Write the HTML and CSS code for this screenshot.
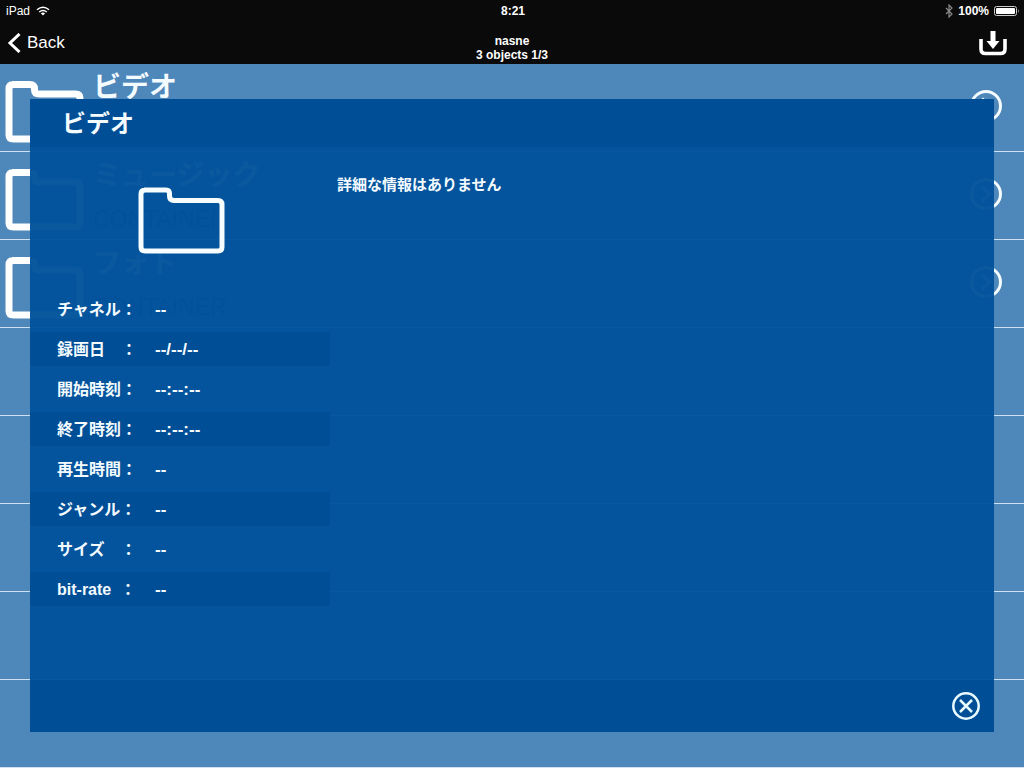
FILE: index.html
```html
<!DOCTYPE html>
<html lang="ja">
<head>
<meta charset="utf-8">
<meta name="viewport" content="width=device-width, initial-scale=1">
<title>nasne</title>
<link rel="stylesheet" href="styles.css">
</head>
<body>
<svg class="symbols" aria-hidden="true">
  <symbol id="folder" viewBox="0 0 78 62">
    <path d="M6.500 3.500H24Q29 3.500 29 8V9Q29 13 34 13H70Q74.500 13 74.500 17.500V54Q74.500 58 70 58H8Q3.500 58 3.500 54V8Q3.500 3.500 8 3.500Z"/>
  </symbol>
  <symbol id="more" viewBox="0 0 34 34">
    <circle cx="17" cy="17" r="14.500"/>
    <path d="M13 9.500L20.500 17L13 24.500"/>
  </symbol>
</svg>
<header class="top">
  <div class="status">
    <div class="status-left">
      <span>iPad</span>
      <svg class="wifi" viewBox="0 0 14 10" aria-hidden="true">
        <path d="M1 3.800Q7 -1.400 13 3.800M3.200 6Q7 2.800 10.800 6" fill="none" stroke="#fff" stroke-width="1.400"/>
        <path d="M4.800 7.300Q7 5.600 9.200 7.300L7 9.600Z" fill="#fff"/>
      </svg>
    </div>
    <time>8:21</time>
    <div class="status-right">
      <svg class="bluetooth" viewBox="0 0 8 14" aria-hidden="true"><path d="M1 4L7 10L4 13V1L7 4L1 10" fill="none" stroke="#888" stroke-width="1.200"/></svg>
      <span>100%</span>
      <svg class="battery" viewBox="0 0 26 10" aria-hidden="true">
        <rect x=".5" y=".5" width="22" height="9" rx="2" fill="none" stroke="#ccc"/>
        <rect x="2" y="2" width="19" height="6" rx="1" fill="#fff"/>
        <path d="M24 3Q25.500 5 24 7Z" fill="#ccc"/>
      </svg>
    </div>
  </div>
  <nav class="nav">
    <button class="back" type="button">
      <svg class="chevron" viewBox="0 0 14 20" aria-hidden="true"><path d="M12.500 1L3 10L12.500 19" fill="none" stroke="#fff" stroke-width="3"/></svg>
      Back
    </button>
    <h1 class="heading">nasne<br>3 objects 1/3</h1>
    <button class="download" type="button" aria-label="Download">
      <svg class="download-icon" viewBox="0 0 28 25" aria-hidden="true">
        <path d="M2 8V18Q2 22.500 6.500 22.500H21.500Q26 22.500 26 18V8" fill="none" stroke="#fff" stroke-width="3.600"/>
        <path d="M11.500 0H16.500V10H20.500L14 18L7.500 10H11.500Z" fill="#fff"/>
      </svg>
    </button>
  </nav>
</header>
<main class="content">
  <ul class="list">
    <li class="item"><svg class="item-folder"><use href="#folder"/></svg><div class="item-text"><h2 class="item-title">ビデオ</h2></div><svg class="more"><use href="#more"/></svg></li>
    <li class="item"><svg class="item-folder"><use href="#folder"/></svg><div class="item-text"><h2 class="item-title">ミュージック</h2><p class="item-kind">CONTAINER</p></div><svg class="more"><use href="#more"/></svg></li>
    <li class="item"><svg class="item-folder"><use href="#folder"/></svg><div class="item-text"><h2 class="item-title">フォト</h2><p class="item-kind">CONTAINER</p></div><svg class="more"><use href="#more"/></svg></li>
    <li class="item"></li>
    <li class="item"></li>
    <li class="item"></li>
    <li class="item"></li>
    <li class="item"></li>
  </ul>
  <section class="dialog" role="dialog" aria-labelledby="dialog-title">
    <h2 class="dialog-title" id="dialog-title">ビデオ</h2>
    <div class="dialog-body">
      <div class="side">
        <div class="thumb"><svg class="thumb-folder" viewBox="0 0 87 67" aria-hidden="true"><path d="M6 3H28Q31.500 3 31.500 6.500V9Q31.500 13.500 36 13.500H80Q84 13.500 84 17.500V60Q84 64 80 64H7Q3 64 3 60V7Q3 3 7 3Z"/></svg></div>
        <dl class="facts">
          <div class="fact"><dt>チャネル：</dt><dd>--</dd></div>
          <div class="fact"><dt>録画日　：</dt><dd>--/--/--</dd></div>
          <div class="fact"><dt>開始時刻：</dt><dd>--:--:--</dd></div>
          <div class="fact"><dt>終了時刻：</dt><dd>--:--:--</dd></div>
          <div class="fact"><dt>再生時間：</dt><dd>--</dd></div>
          <div class="fact"><dt>ジャンル：</dt><dd>--</dd></div>
          <div class="fact"><dt>サイズ　：</dt><dd>--</dd></div>
          <div class="fact"><dt>bit-rate&nbsp;&nbsp;：</dt><dd>--</dd></div>
        </dl>
      </div>
      <p class="description">詳細な情報はありません</p>
    </div>
    <div class="dialog-foot">
      <button class="close" type="button" aria-label="閉じる">
        <svg class="close-icon" viewBox="0 0 28 28" aria-hidden="true"><circle cx="14" cy="14" r="12.700"/><path d="M8 8L20 20M20 8L8 20"/></svg>
      </button>
    </div>
  </section>
</main>
</body>
</html>
```
FILE: styles.css
```css
* { box-sizing: border-box; margin: 0; padding: 0; }

body {
  display: flex;
  flex-direction: column;
  min-height: 100vh;
  background: #4e87b9;
  color: #f4fbff;
  font-family: "Liberation Sans", "Noto Sans CJK JP", sans-serif;
}

button { border: 0; background: none; color: inherit; font: inherit; cursor: pointer; }
svg { display: block; flex: none; }
.symbols { position: absolute; width: 0; height: 0; }

.top { height: 64px; background: #0a0a0a; color: #fff; }

.status {
  display: grid;
  grid-template-columns: 1fr auto 1fr;
  align-items: center;
  height: 22px;
  padding: 0 4px 0 6px;
  font-size: 12px;
}
.status time { font-weight: bold; }
.status-left, .status-right { display: flex; align-items: center; gap: 6px; }
.status-right { justify-content: flex-end; gap: 5px; font-weight: bold; }
.wifi { width: 14px; height: 10px; }
.bluetooth { width: 8px; height: 14px; }
.battery { width: 26px; height: 10px; }

.nav {
  display: grid;
  grid-template-columns: 1fr auto 1fr;
  align-items: center;
  height: 42px;
  padding: 0 17px 0 7px;
}
.back { display: flex; align-items: center; gap: 6px; justify-self: start; font-size: 17px; }
.chevron { width: 14px; height: 20px; }
.heading { padding: 10px 0 0 10px; text-align: center; font-size: 12px; line-height: 14px; font-weight: bold; }
.download { justify-self: end; }
.download-icon { width: 28px; height: 25px; }

.content { position: relative; flex: 1; }

.list { list-style: none; }
.item {
  display: flex;
  align-items: flex-start;
  gap: 9px;
  height: 88px;
  padding: 3px 21px 0 5px;
  border-bottom: 1px solid #cfe0f0;
}
.item-folder {
  width: 79px;
  height: 62px;
  margin-top: 14px;
  fill: none;
  stroke: #fff;
  stroke-width: 7;
}
.item-text { flex: 1; }
.item-title { font-size: 28px; line-height: 42px; font-weight: bold; }
.item-kind { color: #0a3a86; font-size: 23px; line-height: 44px; }
.more { width: 34px; height: 34px; margin-top: 22px; fill: none; stroke: #f4fbff; stroke-width: 3; }

.dialog {
  position: absolute;
  inset: 35px 30px 36px;
  display: flex;
  flex-direction: column;
}
.dialog-title {
  height: 48px;
  padding-left: 32px;
  background: #004e96;
  font-size: 24px;
  line-height: 50px;
  font-weight: bold;
}
.dialog-body { display: flex; flex: 1; background: rgba(0, 82, 155, .96); }
.side { width: 300px; }
.thumb { display: flex; justify-content: center; height: 145px; padding: 40px 0 0 2px; }
.thumb-folder { width: 87px; height: 67px; fill: none; stroke: #f7fcff; stroke-width: 5; }

.facts { display: grid; gap: 6px; font-size: 16px; font-weight: bold; }
.fact { display: flex; align-items: center; height: 34px; padding-left: 27px; }
.fact:nth-child(even) { background: #004e96; }
.fact dt { width: 98px; padding-bottom: 3px; white-space: nowrap; }
.fact dd { font-size: 17px; line-height: 20px; padding-top: 1px; }

.description { padding: 28px 0 0 7px; font-size: 15px; line-height: 20px; font-weight: bold; }

.dialog-foot {
  display: flex;
  align-items: center;
  justify-content: flex-end;
  height: 52px;
  padding-right: 14px;
  background: #004e96;
}
.close-icon { width: 28px; height: 28px; fill: none; stroke: #e8fbff; stroke-width: 2.500; }
```
